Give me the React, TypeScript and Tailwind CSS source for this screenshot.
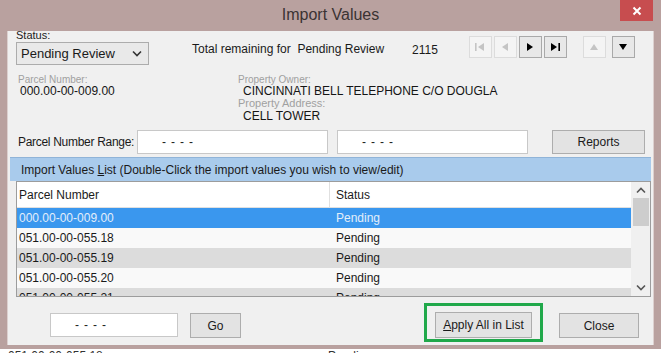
import type { ReactNode } from "react";

const rows = [
  { parcel: "000.00-00-009.00", status: "Pending", kind: "sel" },
  { parcel: "051.00-00-055.18", status: "Pending", kind: "white" },
  { parcel: "051.00-00-055.19", status: "Pending", kind: "gray" },
  { parcel: "051.00-00-055.20", status: "Pending", kind: "white" },
  { parcel: "051.00-00-055.21", status: "Pending", kind: "gray" },
];

function NavButton({ enabled, children }: { enabled: boolean; children: ReactNode }) {
  return (
    <div
      className={
        "w-[23px] h-[22px] flex items-center justify-center border " +
        (enabled ? "bg-[#e8e8e8] border-[#a9a9a9] text-black" : "bg-[#f4f4f4] border-[#dcdcdc] text-[#c4c4c4]")
      }
    >
      {children}
    </div>
  );
}

function Tri({ dir }: { dir: "l" | "r" | "u" | "d" }) {
  const pts = { l: "8,1 8,9 2,5", r: "2,1 2,9 8,5", u: "1,8 9,8 5,2", d: "1,2 9,2 5,8" }[dir];
  return (
    <svg width="10" height="10" viewBox="0 0 10 10">
      <polygon points={pts} fill="currentColor" />
    </svg>
  );
}

function Edge({ dir }: { dir: "first" | "last" }) {
  return (
    <svg width="12" height="10" viewBox="0 0 12 10">
      {dir === "first" ? (
        <>
          <rect x="1" y="1" width="1.6" height="8" fill="currentColor" />
          <polygon points="10,1 10,9 4,5" fill="currentColor" />
        </>
      ) : (
        <>
          <polygon points="2,1 2,9 8,5" fill="currentColor" />
          <rect x="9.4" y="1" width="1.6" height="8" fill="currentColor" />
        </>
      )}
    </svg>
  );
}

function Btn({ className, children }: { className: string; children: ReactNode }) {
  return (
    <div className={"flex items-center justify-center bg-[#e3e3e3] border border-[#adadad] text-[12px] text-[#1a1a1a] " + className}>
      {children}
    </div>
  );
}

function Field({ className }: { className: string }) {
  return (
    <div className={"bg-white border border-[#c8c8c8] flex items-center text-[12px] text-[#222] " + className}>
      <span className="pl-[24px] tracking-[5px]">----</span>
    </div>
  );
}

export default function App() {
  return (
    <div className="w-[661px] h-[353px] bg-white overflow-hidden text-[#1a1a1a]" style={{ fontFamily: '"Liberation Sans", Arial, sans-serif' }}>
      <div className="bg-[#b9a19f] px-[7px] pb-[4px]">
        {/* title bar */}
        <div className="h-[31px] grid grid-cols-[1fr_auto_1fr] items-start">
          <div />
          <div className="pt-[5px] text-[16px] text-[#3b3333] leading-[20px]">Import Values</div>
          <div className="flex justify-end pr-[1px]">
            <div className="w-[33px] h-[21px] bg-[#c74d4f] flex items-center justify-center text-white">
              <svg width="10" height="10" viewBox="0 0 10 10">
                <path d="M1.5 1.5 L8.5 8.5 M8.5 1.5 L1.5 8.5" stroke="white" strokeWidth="2" />
              </svg>
            </div>
          </div>
        </div>

        {/* client area */}
        <div className="h-[314px] bg-[#f0f0f0] border-l border-r border-[#dcd0cf] flex flex-col">
          {/* status row */}
          <div className="flex items-start h-[36px] shrink-0">
            <div className="ml-[8px] flex flex-col">
              <span className="text-[11px] leading-[10px] text-[#222] -mt-[1px]">Status:</span>
              <div className="mt-[2px] w-[133px] h-[23px] bg-[#e9e9e9] border border-[#acacac] flex items-center justify-between px-[4px] text-[13px]">
                <span>Pending Review</span>
                <svg width="10" height="7" viewBox="0 0 10 7" className="mr-[2px]">
                  <path d="M1 1.5 L5 5.5 L9 1.5" fill="none" stroke="#333" strokeWidth="1.6" />
                </svg>
              </div>
            </div>
            <span className="ml-[43px] mt-[9px] text-[12px] whitespace-nowrap">Total remaining for&nbsp; Pending Review</span>
            <span className="ml-[28px] mt-[10px] text-[12px]">2115</span>
            <div className="ml-[31px] mt-[5px] flex gap-[2px]">
              <NavButton enabled={false}><Edge dir="first" /></NavButton>
              <NavButton enabled={false}><Tri dir="l" /></NavButton>
              <NavButton enabled><Tri dir="r" /></NavButton>
              <NavButton enabled><Edge dir="last" /></NavButton>
              <div className="w-[12px]" />
              <NavButton enabled={false}><Tri dir="u" /></NavButton>
              <div className="w-[2px]" />
              <NavButton enabled><Tri dir="d" /></NavButton>
            </div>
          </div>

          {/* parcel info */}
          <div className="flex mt-[8px] h-[54px] shrink-0">
            <div className="ml-[10px] w-[220px] flex flex-col">
              <span className="text-[10px] leading-[10px] text-[#a0a0a0]">Parcel Number:</span>
              <span className="ml-[2px] text-[12px] leading-[12px] text-[#151515]">000.00-00-009.00</span>
            </div>
            <div className="flex flex-col">
              <span className="text-[10px] leading-[10px] text-[#a0a0a0]">Property Owner:</span>
              <span className="ml-[5px] text-[12px] leading-[12px] text-[#151515]">CINCINNATI BELL TELEPHONE C/O DOUGLA</span>
              <span className="mt-[1px] text-[11px] leading-[11px] text-[#a0a0a0]">Property Address:</span>
              <span className="mt-[1px] ml-[5px] text-[12px] leading-[13px] text-[#151515]">CELL TOWER</span>
            </div>
          </div>

          {/* range row */}
          <div className="flex items-center h-[25px] shrink-0">
            <span className="ml-[10px] text-[12px] w-[119px] shrink-0 whitespace-nowrap tracking-[-0.3px]">Parcel Number Range:</span>
            <Field className="w-[191px] h-[24px]" />
            <Field className="ml-[9px] w-[191px] h-[24px]" />
            <Btn className="ml-[24px] w-[93px] h-[24px]">Reports</Btn>
          </div>

          {/* list header bar */}
          <div className="mt-[3px] ml-[2px] mr-[2px] h-[24px] shrink-0 bg-[#a9cbec] border-t border-[#90b4d8] flex items-center text-[12px] text-[#1a1a1a] pl-[11px] whitespace-pre">
            <span>Import Values <span className="underline">L</span>ist (Double-Click the import values you wish to view/edit)</span>
          </div>

          {/* list */}
          <div className="ml-[8px] mr-[2px] h-[116px] shrink-0 border border-[#9c9c9c] bg-white flex">
            <div className="flex-1 flex flex-col overflow-hidden">
              <div className="h-[26px] shrink-0 flex items-center text-[12px] border-b border-[#e0e0e0]">
                <span className="w-[313px] pl-[2px] border-r border-[#e0e0e0] h-full flex items-center">Parcel Number</span>
                <span className="pl-[6px]">Status</span>
              </div>
              {rows.map((r) => (
                <div
                  key={r.parcel}
                  className={
                    "h-[20px] shrink-0 flex items-center text-[12px] " +
                    (r.kind === "sel" ? "bg-[#3a97ee] text-[#e3eefa]" : r.kind === "gray" ? "bg-[#dcdcdc]" : "bg-[#f9f9f9]")
                  }
                >
                  <span className="w-[313px] pl-[2px]">{r.parcel}</span>
                  <span className="pl-[6px]">{r.status}</span>
                </div>
              ))}
            </div>
            <div className="w-[19px] bg-[#f0f0f0] flex flex-col items-center">
              <svg width="10" height="7" viewBox="0 0 10 7" className="mt-[5px]">
                <path d="M1 5.5 L5 1.5 L9 5.5" fill="none" stroke="#555" strokeWidth="1.6" />
              </svg>
              <div className="mt-[4px] w-[16px] h-[28px] bg-[#cdcdcd]" />
              <div className="flex-1" />
              <svg width="10" height="7" viewBox="0 0 10 7" className="mb-[5px]">
                <path d="M1 1.5 L5 5.5 L9 1.5" fill="none" stroke="#555" strokeWidth="1.6" />
              </svg>
            </div>
          </div>

          {/* bottom buttons */}
          <div className="flex items-start">
            <Field className="mt-[16px] ml-[42px] w-[128px] h-[24px]" />
            <Btn className="mt-[16px] ml-[12px] w-[51px] h-[25px]">Go</Btn>
            <div className="mt-[6px] ml-[183px] border-[3px] border-[#20a84a] px-[8px] pt-[6px] pb-[1px]">
              <Btn className="w-[97px] h-[26px]">
                <span><span className="underline">A</span>pply All in List</span>
              </Btn>
            </div>
            <Btn className="mt-[16px] ml-[16px] w-[80px] h-[25px]">Close</Btn>
          </div>
        </div>
      </div>
      {/* content behind the dialog */}
      <div className="flex text-[12px] leading-[12px] text-[#333] mt-[1px]">
        <span className="ml-[8px] w-[320px]">051.00-00-055.18</span>
        <span>Pending</span>
      </div>
    </div>
  );
}
